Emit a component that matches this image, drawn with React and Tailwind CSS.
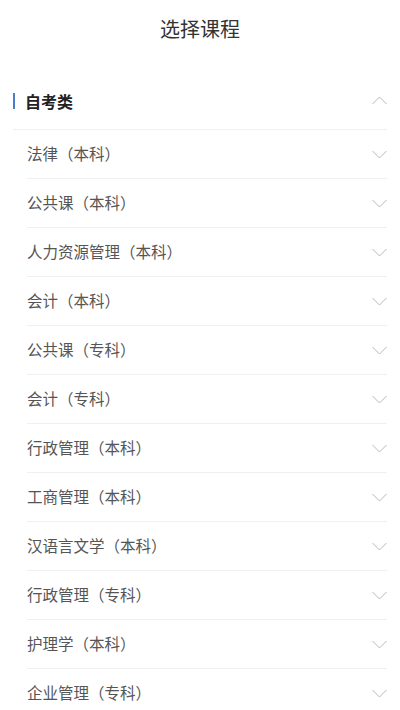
const courses = [
  "法律（本科）",
  "公共课（本科）",
  "人力资源管理（本科）",
  "会计（本科）",
  "公共课（专科）",
  "会计（专科）",
  "行政管理（本科）",
  "工商管理（本科）",
  "汉语言文学（本科）",
  "行政管理（专科）",
  "护理学（本科）",
  "企业管理（专科）",
];

function Chevron({ up }) {
  return (
    <svg width="15" height="9" viewBox="0 0 15 9" fill="none" className="shrink-0">
      <polyline
        points={up ? "0.5,8 7.5,1 14.5,8" : "0.5,1 7.5,8 14.5,1"}
        stroke="#b8b8b8"
        strokeWidth="1"
      />
    </svg>
  );
}

export default function App() {
  return (
    <div
      className="w-[400px] h-[710px] overflow-hidden bg-white"
      style={{ fontFamily: '"Noto Sans CJK SC", "Noto Sans", sans-serif' }}
    >
      {/* title */}
      <div className="h-[58px] flex items-center justify-center text-[20px] text-[#333]">
        选择课程
      </div>

      <div className="mt-[14px] mx-[13px]">
        {/* group header */}
        <div className="h-[58px] flex items-center justify-between border-b border-[#eef0f3]">
          <div className="flex items-center">
            <span className="w-[2px] h-[16px] bg-[#4a7bd0]" />
            <span className="ml-[10px] text-[16px] font-bold text-[#222]">自考类</span>
          </div>
          <Chevron up />
        </div>

        {/* courses */}
        <div className="pl-[14px]">
          {courses.map((name) => (
            <div
              key={name}
              className="h-[49px] flex items-center justify-between border-b border-[#eef0f3]"
            >
              <span className="text-[15.5px] text-[#555]">{name}</span>
              <Chevron />
            </div>
          ))}
        </div>
      </div>
    </div>
  );
}
